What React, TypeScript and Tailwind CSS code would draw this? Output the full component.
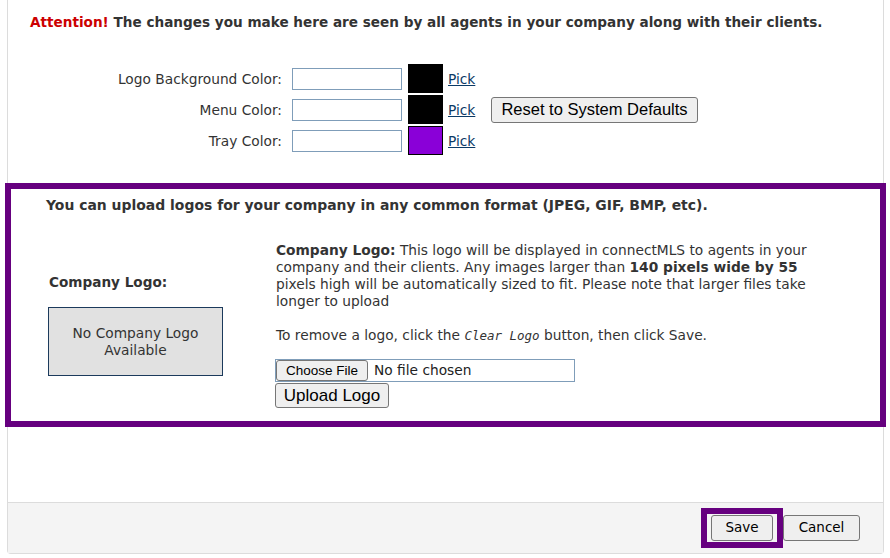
import React from "react";

const btn =
  "bg-[#efefef] border border-[#767676] rounded-[3px] text-black font-['Liberation_Sans',Arial,sans-serif] flex items-center justify-center leading-none";

function ColorRow({ label, swatch }: { label: string; swatch: string }) {
  return (
    <div className="flex items-center h-[29px]">
      <div className="w-[274px] text-right whitespace-nowrap pt-[1px]">{label}</div>
      <div className="ml-[10px] w-[110px] h-[22px] border border-[#7f9db9] bg-white" />
      <div className={`ml-[6px] w-[35px] h-[29px] border border-black ${swatch}`} />
      <a className="ml-[5px] pt-[1px] text-[#0b3a66] underline cursor-pointer">Pick</a>
    </div>
  );
}

export default function App() {
  return (
    <div className="w-[890px] h-[558px] bg-white overflow-hidden font-['DejaVu_Sans',Verdana,sans-serif] text-[13.75px] leading-[17px] text-[#333]">
      <div className="ml-[7px] w-[877px] h-[554px] border-x border-b border-[#dcdcdc] rounded-b-[4px] flex flex-col">
        <div className="flex-1 bg-white">
          <div className="pt-[14px] pl-[22px] font-bold whitespace-nowrap text-[13.6px]">
            <span className="text-[#cc0000]">Attention!</span> The changes you make here are seen by all agents in your company along with their clients.
          </div>

          <div className="mt-[33px] flex items-center">
            <div className="w-[483px] flex flex-col gap-[2px]">
              <ColorRow label="Logo Background Color:" swatch="bg-black" />
              <ColorRow label="Menu Color:" swatch="bg-black" />
              <ColorRow label="Tray Color:" swatch="bg-[#8a00d8]" />
            </div>
            <button className={`${btn} w-[207px] h-[26px] text-[16.5px]`}>Reset to System Defaults</button>
          </div>

          <div className="mt-[28px] -mx-[3px] border-[6px] border-[#66007f] bg-white pl-[35px] pt-[8px] pb-[13px]">
            <div className="font-bold whitespace-nowrap text-[13.95px]">
              You can upload logos for your company in any common format (JPEG, GIF, BMP, etc).
            </div>
            <div className="mt-[26px] flex items-start">
              <div className="w-[229px] pl-[3px] pt-[34px] flex flex-col">
                <div className="font-bold text-[13.6px]">Company Logo:</div>
                <div className="mt-[16px] w-[175px] h-[69px] -ml-[1px] border border-[#1c3a5c] bg-[#e1e1e1] flex items-center justify-center text-center pt-[1px]">
                  No Company Logo
                  <br />
                  Available
                </div>
              </div>
              <div className="flex flex-col">
                <div className="pl-[1px] pt-[2px] whitespace-nowrap">
                  <b>Company Logo:</b> This logo will be displayed in connectMLS to agents in your
                  <br />
                  company and their clients. Any images larger than <b>140 pixels wide by 55</b>
                  <br />
                  pixels high will be automatically sized to fit. Please note that larger files take
                  <br />
                  longer to upload
                  <br />
                  <br />
                  To remove a logo, click the <i className="font-['DejaVu_Sans_Mono',monospace] text-[12.5px]">Clear Logo</i> button, then click Save.
                </div>
                <div className="mt-[15px] w-[300px] h-[23px] border border-[#7f9db9] bg-white flex items-center">
                  <div className={`${btn} w-[92px] h-[21px] text-[13.5px]`}>Choose File</div>
                  <span className="ml-[6px] text-[#222]">No file chosen</span>
                </div>
                <button className={`${btn} mt-[1px] w-[114px] h-[25px] text-[17px]`}>Upload Logo</button>
              </div>
            </div>
          </div>
        </div>

        <div className="h-[51px] border-t border-[#dcdcdc] bg-[#f4f4f4] flex items-center justify-end pr-[23px]">
          <div className="border-[6px] border-[#66007f] px-[4px] py-[1px] bg-[#f4f4f4]">
            <button className={`${btn} w-[62px] h-[26px] !font-['DejaVu_Sans',Verdana,sans-serif] text-[13.5px]`}>Save</button>
          </div>
          <button className={`${btn} w-[77px] h-[26px] !font-['DejaVu_Sans',Verdana,sans-serif] text-[13.5px]`}>Cancel</button>
        </div>
      </div>
    </div>
  );
}
